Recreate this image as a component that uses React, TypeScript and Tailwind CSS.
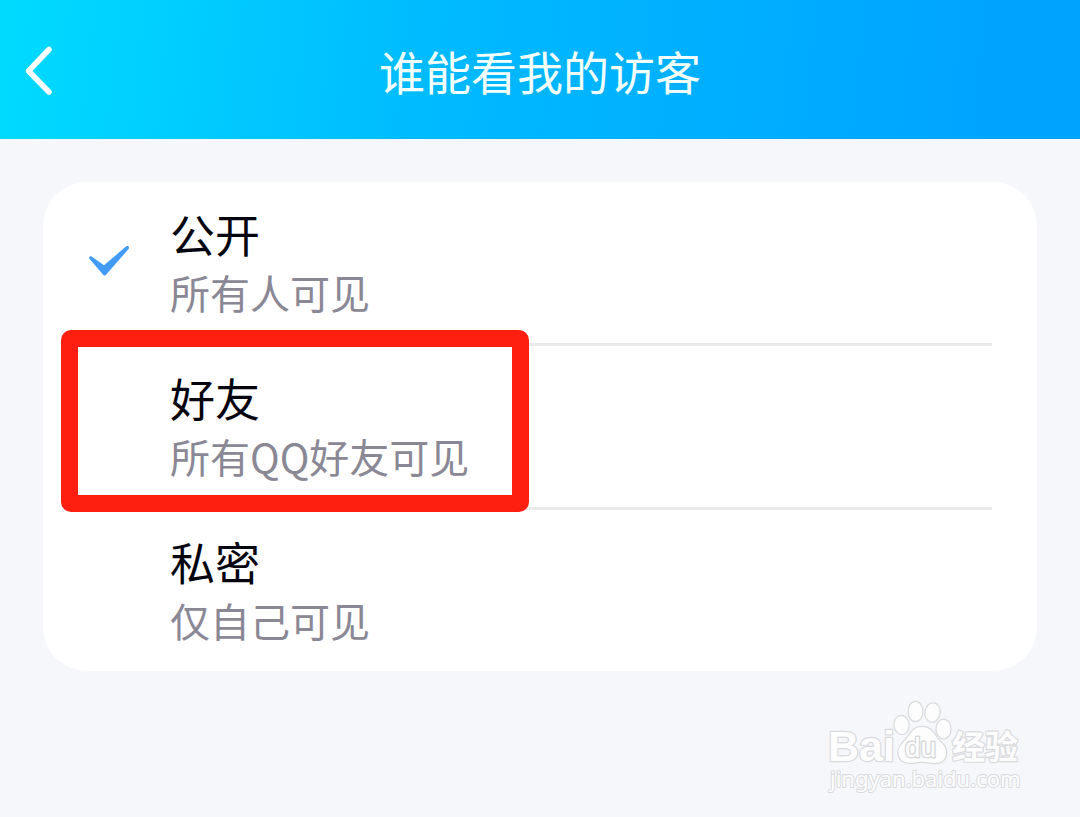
import { useState } from 'react'

interface Option {
  id: string
  title: string
  desc: string
  highlighted?: boolean
}

const options: Option[] = [
  { id: 'public', title: '公开', desc: '所有人可见' },
  { id: 'friends', title: '好友', desc: '所有QQ好友可见', highlighted: true },
  { id: 'private', title: '私密', desc: '仅自己可见' }
]

const BackIcon = () => (
  <svg className="w-8 h-14" viewBox="0 0 32 56" fill="none" stroke="white" strokeWidth="5.5" strokeLinecap="round" strokeLinejoin="round">
    <path d="M25 7.5 L4.5 29 L25 50" />
  </svg>
)

const CheckIcon = () => (
  <svg className="w-11 h-9" viewBox="0 0 44 36" fill="#429bf7">
    <path d="M3.2 13.5 C2.6 11.6 4.4 10.6 6 11.8 L18 20.2 L40 1.6 C42 0.2 43.8 2 42.6 4 L19.8 30 Q18.600 31 17.400 30 Z" />
  </svg>
)

const Watermark = () => (
  <svg
    className="w-[200px] h-[96px]"
    viewBox="0 0 200 96"
    fill="#fdfdfe"
    stroke="#d9dadc"
    strokeWidth="2.4"
    strokeLinejoin="round"
    paintOrder="stroke"
  >
    <text x="0" y="62" fontSize="43" fontWeight="700" fontFamily="'Liberation Sans', sans-serif">Bai</text>
    {/* paw */}
    <g>
      <ellipse cx="73.5" cy="26" rx="7" ry="9" transform="rotate(-8 73.5 26)" />
      <ellipse cx="87.5" cy="12.5" rx="6.8" ry="9.5" />
      <ellipse cx="104.5" cy="13.5" rx="7" ry="9.2" transform="rotate(10 104.5 13.5)" />
      <ellipse cx="115.5" cy="30" rx="7" ry="9.2" />
      <path d="M94 28 C102 28 105 33 109 39 C113 44 119 47 118 55 C117 63 110 65 102 63.500 C97 62.500 92 62.500 86 63.500 C78 65 71 62 70.500 54 C70 47 77 42 80 38 C85 31 87 28 94 28 Z" />
    </g>
    <text x="77" y="58" fontSize="28" strokeWidth="3" fontFamily="'Liberation Sans', sans-serif">du</text>
    <text x="124" y="60" fontSize="33" fontWeight="700" fontFamily="'Noto Sans CJK SC', sans-serif">经验</text>
    <text x="2" y="88" fontSize="22" strokeWidth="2" fontFamily="'Noto Sans', sans-serif">jingyan.baidu.com</text>
  </svg>
)

export default function App() {
  const [selected, setSelected] = useState('public')

  return (
    <div className="min-h-screen bg-[#f5f7fb] font-['Noto_Sans_CJK_SC',sans-serif]">
      <header className="grid grid-cols-[1fr_auto_1fr] items-center h-[139px] px-6 bg-[linear-gradient(96deg,#00daff_1%,#00b9ff_42%,#00a4ff_92%)]">
        <button type="button" aria-label="返回" className="justify-self-start">
          <BackIcon />
        </button>
        <h1 className="text-[46px] leading-[56px] text-[#f2ffff]">谁能看我的访客</h1>
      </header>

      <main className="px-[43px] pt-[43px]">
        <fieldset className="rounded-[44px] bg-white">
          {options.map((option, index) => (
            <div key={option.id} className="relative">
              {index > 0 && <div className="h-[3px] ml-32 mr-[45px] bg-[#ebebeb]" />}
              <label className="flex pt-[23px] pb-[22px] cursor-pointer">
                <input
                  type="radio"
                  name="visibility"
                  value={option.id}
                  checked={selected === option.id}
                  onChange={() => setSelected(option.id)}
                  className="sr-only"
                />
                <span className="flex items-center w-[127px] pl-[43px] shrink-0">
                  {selected === option.id && <CheckIcon />}
                </span>
                <span className="flex flex-col">
                  <span className="text-[45px] leading-[58px] text-[#05050f]">{option.title}</span>
                  <span className="text-[40px] leading-[58px] text-[#8a8895]">{option.desc}</span>
                </span>
              </label>
              {option.highlighted && (
                <div className="absolute z-10 -top-[13px] left-[18px] w-[468px] h-[182px] rounded-[10px] bg-[#ff1f10] pointer-events-none [clip-path:polygon(evenodd,0_0,100%_0,100%_100%,0_100%,0_0,17px_17px,calc(100%-17px)_17px,calc(100%-17px)_calc(100%-17px),17px_calc(100%-17px),17px_17px)]" />
              )}
            </div>
          ))}
        </fieldset>
      </main>

      <footer className="flex justify-end pt-7 pr-[52px]">
        <Watermark />
      </footer>
    </div>
  )
}
